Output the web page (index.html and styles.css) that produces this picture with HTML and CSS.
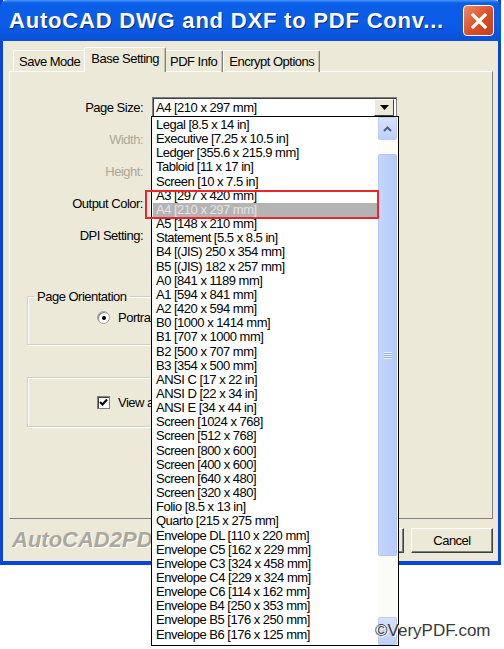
FILE: index.html
```html
<!DOCTYPE html>
<html lang="en">
  <head>
    <meta charset="UTF-8" />
    <title>AutoCAD DWG and DXF to PDF Converter</title>
    <link rel="stylesheet" href="styles.css">
  </head>
  <body>
    <div class="window">
      <div class="titlebar">
        <span class="title">AutoCAD DWG and DXF to PDF Conv...</span>
        <div class="close">
          <svg width="20" height="20" viewBox="0 0 20 20"><path d="M4 4 L16 16 M16 4 L4 16" stroke="#fff" stroke-width="3.2" stroke-linecap="square"/></svg>
        </div>
      </div>
      <div class="client">
        <div class="tabs">
          <div class="tab">Save Mode</div>
          <div class="tab active">Base Setting</div>
          <div class="tab">PDF Info</div>
          <div class="tab">Encrypt Options</div>
        </div>
        <div class="panel">
          <div class="form">
            <span class="lbl">Page Size:</span>
            <div class="combo">
              <span>A4 [210 x 297 mm]</span>
              <span class="combo-btn"><svg width="9" height="5" viewBox="0 0 9 5"><path d="M0 0 H9 L4.5 5 Z" fill="#000"/></svg></span>
            </div>
            <span class="lbl disabled">Width:</span><span></span>
            <span class="lbl disabled">Height:</span><span></span>
            <span class="lbl">Output Color:</span><span></span>
            <span class="lbl">DPI Setting:</span><span></span>
          </div>
          <fieldset class="group orient">
            <legend>Page Orientation</legend>
            <div class="opt">
              <span class="radio"><span class="dot"></span></span>
              <span>Portrait</span>
            </div>
          </fieldset>
          <div class="group view">
            <div class="opt">
              <span class="check">
                <svg width="11" height="11" viewBox="0 0 11 11"><path d="M2 5 L4.5 7.5 L9 2.5" stroke="#000" stroke-width="2" fill="none"/></svg>
              </span>
              <span>View after conversion</span>
            </div>
          </div>
        </div>
        <div class="footer">
          <span class="brand">AutoCAD2PDF</span>
          <div class="buttons">
            <div class="btn">OK</div>
            <div class="btn">Cancel</div>
          </div>
        </div>
      </div>
    </div>

    <div class="dropdown">
      <ul class="options">
        <li>Legal [8.5 x 14 in]</li>
        <li>Executive [7.25 x 10.5 in]</li>
        <li>Ledger [355.6 x 215.9 mm]</li>
        <li>Tabloid [11 x 17 in]</li>
        <li>Screen [10 x 7.5 in]</li>
        <li>A3 [297 x 420 mm]</li>
        <li class="selected">A4 [210 x 297 mm]</li>
        <li>A5 [148 x 210 mm]</li>
        <li>Statement [5.5 x 8.5 in]</li>
        <li>B4 [(JIS) 250 x 354 mm]</li>
        <li>B5 [(JIS) 182 x 257 mm]</li>
        <li>A0 [841 x 1189 mm]</li>
        <li>A1 [594 x 841 mm]</li>
        <li>A2 [420 x 594 mm]</li>
        <li>B0 [1000 x 1414 mm]</li>
        <li>B1 [707 x 1000 mm]</li>
        <li>B2 [500 x 707 mm]</li>
        <li>B3 [354 x 500 mm]</li>
        <li>ANSI C [17 x 22 in]</li>
        <li>ANSI D [22 x 34 in]</li>
        <li>ANSI E [34 x 44 in]</li>
        <li>Screen [1024 x 768]</li>
        <li>Screen [512 x 768]</li>
        <li>Screen [800 x 600]</li>
        <li>Screen [400 x 600]</li>
        <li>Screen [640 x 480]</li>
        <li>Screen [320 x 480]</li>
        <li>Folio [8.5 x 13 in]</li>
        <li>Quarto [215 x 275 mm]</li>
        <li>Envelope DL [110 x 220 mm]</li>
        <li>Envelope C5 [162 x 229 mm]</li>
        <li>Envelope C3 [324 x 458 mm]</li>
        <li>Envelope C4 [229 x 324 mm]</li>
        <li>Envelope C6 [114 x 162 mm]</li>
        <li>Envelope B4 [250 x 353 mm]</li>
        <li>Envelope B5 [176 x 250 mm]</li>
        <li>Envelope B6 [176 x 125 mm]</li>
      </ul>
      <div class="scrollbar">
        <div class="sb-btn">
          <svg width="9" height="6" viewBox="0 0 9 6"><path d="M1 5 L4.5 1.5 L8 5" stroke="#4d6185" stroke-width="2" fill="none"/></svg>
        </div>
        <div class="sb-gap"></div>
        <div class="sb-thumb">
          <svg width="8" height="8" viewBox="0 0 8 8"><path d="M0 1.5 H8 M0 3.5 H8 M0 5.5 H8 M0 7.5 H8" stroke="#eef3fe" stroke-width="1"/><path d="M0 2.5 H8 M0 4.5 H8 M0 6.5 H8" stroke="#8cb0f8" stroke-width="1"/></svg>
        </div>
        <div class="sb-track"></div>
        <div class="sb-btn down"></div>
      </div>
    </div>

    <div class="highlight"></div>
    <div class="watermark">©VeryPDF.com</div>
  </body>
</html>
```

FILE: styles.css
```css
body {
  margin: 0;
  background: #fff;
  font-family: "Liberation Sans", Arial, sans-serif;
  font-size: 13px;
  letter-spacing: -0.5px;
  color: #000;
}

.window {
  width: 495px;
  height: 561px;
  border-left: 3px solid #0a46d6;
  border-right: 3px solid #0a46d6;
  border-bottom: 4px solid #0a46d6;
  background: #ece9d8;
  display: flex;
  flex-direction: column;
}

.titlebar {
  flex-shrink: 0;
  height: 41px;
  margin: 0 -3px;
  padding: 0 7px 0 9px;
  display: flex;
  align-items: center;
  justify-content: space-between;
  background: linear-gradient(#4a94fa 0, #0a5ee8 3px, #0b5ce6 60%, #0a50d8 100%);
  border-radius: 7px 7px 0 0;
}

.title {
  font-weight: bold;
  font-size: 22px;
  letter-spacing: 0.8px;
  color: #fff;
  text-shadow: 1px 1px #0b2a7a;
  white-space: nowrap;
}

.close {
  width: 29px;
  height: 29px;
  border: 1px solid #fff;
  border-radius: 4px;
  background: linear-gradient(135deg, #f08a66, #db4d25 55%, #c2401c);
  display: flex;
  align-items: center;
  justify-content: center;
}

.client {
  flex: 1;
  display: flex;
  flex-direction: column;
  padding: 5px 5px 0 6px;
}

.tabs {
  flex-shrink: 0;
  display: flex;
  align-items: flex-end;
  height: 25px;
  padding-left: 4px;
  position: relative;
  z-index: 1;
}

.tab {
  height: 21px;
  padding: 0 5px;
  line-height: 21px;
  border-top: 1px solid #fff;
  border-left: 1px solid #fff;
  border-right: 1px solid #808080;
  box-shadow: inset -1px 0 #c8c4b4;
  border-radius: 2px 2px 0 0;
  margin-bottom: -1px;
}

.tab.active {
  height: 24px;
  line-height: 22px;
  padding: 0 6px;
  margin: 0 -2px -1px;
  background: #ece9d8;
  position: relative;
  z-index: 2;
}

.panel {
  flex-shrink: 0;
  height: 448px;
  box-sizing: border-box;
  border-top: 1px solid #fff;
  border-left: 1px solid #fff;
  border-right: 1px solid #808080;
  border-bottom: 1px solid #808080;
  display: flex;
  flex-direction: column;
  padding-top: 19px;
}

.form {
  display: grid;
  grid-template-columns: 133px 245px;
  grid-auto-rows: 32px;
  column-gap: 9px;
  align-items: center;
}

.lbl {
  text-align: right;
}

.lbl.disabled {
  color: #aca899;
}

.combo {
  height: 19px;
  background: #fff;
  border: 1px solid #7f7f7f;
  box-shadow: inset 1px 1px #404040;
  display: flex;
  align-items: center;
  justify-content: space-between;
  padding-left: 3px;
}

.combo-btn {
  width: 18px;
  height: 15px;
  margin-right: 2px;
  background: #ece9d8;
  border-top: 1px solid #fff;
  border-left: 1px solid #fff;
  border-right: 1px solid #404040;
  border-bottom: 1px solid #404040;
  display: flex;
  align-items: center;
  justify-content: center;
}

.group {
  margin: 0 102px 0 17px;
  border: 1px solid #d0d0bf;
  box-shadow: 1px 1px #fff, inset 1px 1px #fff;
}

fieldset.group {
  margin-top: 38px;
  height: 56px;
  padding: 0;
  box-sizing: border-box;
}

legend {
  margin-left: 6px;
  padding: 0 3px;
}

.orient .opt {
  margin-top: 6px;
}

.view {
  margin-top: 32px;
  height: 48px;
  display: flex;
  align-items: center;
}

.opt {
  display: flex;
  align-items: center;
  gap: 8px;
  padding-left: 69px;
}

.radio {
  width: 11px;
  height: 11px;
  border-radius: 50%;
  background: #fff;
  border: 1px solid #a0a0a0;
  box-shadow: inset 1px 1px #808080;
  display: flex;
  align-items: center;
  justify-content: center;
}

.dot {
  width: 4px;
  height: 4px;
  border-radius: 50%;
  background: #000;
}

.check {
  width: 11px;
  height: 11px;
  background: #fff;
  border: 1px solid #808080;
  box-shadow: inset 1px 1px #404040;
  display: flex;
  align-items: center;
  justify-content: center;
}

.footer {
  flex: 1;
  display: flex;
  justify-content: space-between;
  align-items: center;
  padding: 0 0 0 3px;
}

.brand {
  font-style: italic;
  font-weight: bold;
  font-size: 22px;
  letter-spacing: 0;
  color: #aba79d;
  text-shadow: 1px 1px #fff;
}

.buttons {
  display: flex;
  gap: 7px;
}

.btn {
  width: 80px;
  height: 23px;
  line-height: 23px;
  text-align: center;
  border-top: 1px solid #fff;
  border-left: 1px solid #fff;
  border-right: 1px solid #404040;
  border-bottom: 1px solid #404040;
  box-shadow: inset -1px -1px #808080;
}

/* open drop-down list of the Page Size combo */
.dropdown {
  position: absolute;
  left: 151px;
  top: 116px;
  width: 246px;
  height: 528px;
  border: 1px solid #000;
  background: #fff;
  display: flex;
}

.options {
  list-style: none;
  margin: 0;
  padding: 1px 0 0 1px;
  flex: 1;
}

.options li {
  height: 14.17px;
  line-height: 14.17px;
  padding-left: 3px;
  white-space: nowrap;
}

.options li.selected {
  background: #b4b4b4;
  color: #e4e4e4;
}

.scrollbar {
  width: 19px;
  margin-right: 1px;
  display: flex;
  flex-direction: column;
  background: #f6f6f1;
}

.sb-btn {
  height: 21px;
  background: linear-gradient(#d6e2fd, #bcd0fb);
  border: 1px solid #bccef8;
  border-radius: 2px;
  display: flex;
  align-items: center;
  justify-content: center;
}

.sb-btn.down {
  height: 26px;
}

.sb-gap {
  height: 14px;
  background: #fcfcf8;
}

.sb-thumb {
  height: 400px;
  background: linear-gradient(90deg, #c7d7fc, #bcd0fb 50%, #b6cbfa);
  border: 1px solid #b0c6f6;
  border-radius: 2px;
  display: flex;
  align-items: center;
  justify-content: center;
}

.sb-track {
  flex: 1;
  background: #fbfbf7;
}

.highlight {
  position: absolute;
  left: 145px;
  top: 190px;
  width: 230px;
  height: 25px;
  border: 2px solid #e8262b;
}

.watermark {
  position: absolute;
  left: 375px;
  top: 621px;
  font-size: 17px;
  letter-spacing: 0;
  color: #3a3a3a;
  text-shadow: 1px 1px #fff;
}
```
